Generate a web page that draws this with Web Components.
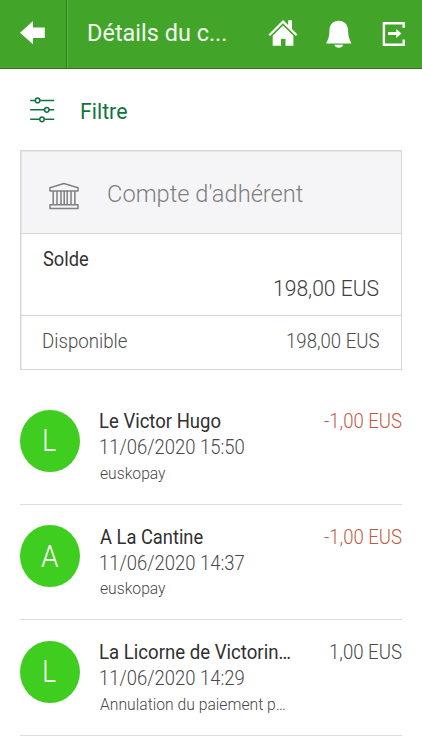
<!DOCTYPE html>
<html lang="fr"><head><meta charset="utf-8"><title>Détails du compte</title>
<style>
body{margin:0;background:#fff;font-family:Roboto,"Liberation Sans",sans-serif;font-weight:300;color:#4c4c4c;overflow:hidden}
</style></head><body>
<account-page></account-page>
<script>
const define=(name,html,setup)=>customElements.define(name,class extends HTMLElement{
  connectedCallback(){
    if(this.shadowRoot)return;
    this.attachShadow({mode:'open'}).innerHTML=html;
    if(setup)setup.call(this,this.shadowRoot);
  }
});

// One line of text whose ink spans exactly `w` pixels.
const pen=document.createElement('canvas').getContext('2d');
define('fit-text',`<style>:host{display:block;flex:none;white-space:nowrap}span{display:inline-block;white-space:pre;transform-origin:0 0}</style><span><slot></slot></span>`,function(root){
  const size=+this.getAttribute('size'),w=+this.getAttribute('w'),line=this.getAttribute('line')||24;
  this.style.fontSize=size+'px';
  this.style.lineHeight=line+'px';
  this.style.height=line+'px';
  this.style.width=w+'px';
  const weight=this.getAttribute('weight')||300;
  this.style.fontWeight=weight;
  const slot=root.querySelector('slot'),span=root.querySelector('span');
  const fit=()=>{
    const text=slot.assignedNodes({flatten:true}).map(n=>n.textContent).join('');
    if(!text)return;
    pen.font=`${weight} ${size}px Roboto`;
    const m=pen.measureText(text);
    const k=w/(m.actualBoundingBoxLeft+m.actualBoundingBoxRight);
    span.style.transform=`translateX(${m.actualBoundingBoxLeft*k}px) scaleX(${k})`;
  };
  fit();
  slot.addEventListener('slotchange',fit);
});

define('top-bar',`<style>
:host{display:flex;height:68px;background:#42a529;border-bottom:1px solid #35791f;color:#fff}
.back{width:66px;border-right:1px solid #2f8119;box-shadow:1px 0 #58b53d;flex:none}
.title{padding:18px 0 0 22px;flex:1;color:#f4fbf2}
svg{display:block;flex:none}
</style>
<div class="back"><svg width="66" height="68"><path fill="#fff" d="M20 32.7 33 21v6.6h11.8v10.5H33v6.2z"/></svg></div>
<div class="title"><fit-text size="24.8" w="137" line="30" weight="400"><slot></slot></fit-text></div>
<svg width="160" height="68" viewBox="262 0 160 68" fill="#fff">
<path d="M268.5 34.4 283 20l5.2 5.1V20.3h3.8v8.6l5.5 5.5-1.6 1.7L283 23.2l-12.9 12.9z"/>
<path d="M283 25.4 293.4 35.7V45.8H285.5V39H281V45.8H272.7V35.7z"/>
<path d="M338.7 20.8c5.6 0 8.9 3.6 9.3 8.9.4 5.5.6 8.5 3.2 12.7v1.2H326.4v-1.2c2.7-4.2 2.8-7.2 3.1-12.7.3-5.3 3.6-8.9 9.2-8.9z"/><path d="M334.2 44.7h9.1c-.8 2-2.4 3-4.5 3s-3.8-1-4.6-3z"/>
<path fill="none" stroke="#fff" stroke-width="2.4" d="M403.7 28V23.3H383.9V44.7H403.7V39.5"/>
<path d="M388 32h8.3v-3.1l5.2 4.5-5.2 4.7V35H388z"/>
</svg>`);

define('filter-button',`<style>:host{display:flex;height:81px;color:#0f7440;box-sizing:border-box}svg{display:block;margin:28px 0 0 29px;flex:none}fit-text{margin:29px 0 0 24.5px}</style>
<svg width="27" height="28" viewBox="29 97 27 28" fill="#fff" stroke="#0f7440" stroke-width="1.5"><path d="M30.2 100.4H54.2M30.2 109.8H54.2M30.2 119.3H54.2"/><ellipse cx="37.6" cy="100.4" rx="2.2" ry="2.4"/><ellipse cx="46.8" cy="109.8" rx="2.2" ry="2.4"/><ellipse cx="42" cy="119.3" rx="2.2" ry="2.4"/></svg>
<fit-text size="21.6" w="46" line="27" weight="400"><slot></slot></fit-text>`);

define('account-card',`<style>
:host{display:block;margin:0 20px;height:218px;border:1px solid #d7d7d8;box-shadow:inset 1px 1px #ebebec}
.head{display:flex;height:82px;background:#f5f5f8;border-bottom:1px solid #d7d7d8;color:#808080;box-shadow:inset 1px 1px #e7e7e9}
.head svg{margin:30px 0 0 27px}.head fit-text{margin:28px 0 0 28.5px}
.balance{height:82px;border-bottom:1px solid #d4d4d4;padding:13.5px 22px 0 22px;box-sizing:border-box}
.balance fit-text:first-child{color:#333}
.balance fit-text:last-child{margin:4.5px 0 0 auto;color:#404040}
.avail{display:flex;justify-content:space-between;padding:14px 22px 0 22px}
</style>
<div class="head"><svg width="31" height="30" viewBox="48 181 31 30" fill="none" stroke="#808080" stroke-width="1.5" stroke-linejoin="round"><path d="M50 187.7 63.9 183.5 78 187.7V191H50zM50 204.7H78V208.6H50zM53.2 191v13.7M57 191v13.7M61 191v13.7M64.2 191v13.7M67.2 191v13.7M71 191v13.7M74.9 191v13.7"/></svg>
<fit-text size="24.6" w="195.5" line="30">Compte d'adhérent</fit-text></div>
<div class="balance"><fit-text size="19.3" w="45.5" weight="400">Solde</fit-text><fit-text size="22" w="105" line="26">198,00 EUS</fit-text></div>
<div class="avail"><fit-text size="19.3" w="84.5">Disponible</fit-text><fit-text size="19.3" w="92">198,00 EUS</fit-text></div>`);

define('payment-row',`<style>
:host{display:flex;margin:0 20px;height:114.5px;border-bottom:1px solid #dcdcdc;color:#484848}
.avatar{flex:none;width:59.5px;height:62px;border-radius:50%;background:#3fcd1f;color:#fff;margin:20.5px 20.5px 0 0;display:flex;justify-content:center}
.avatar fit-text{margin-top:13.5px}
.info{flex:1;padding-top:21px}.name{color:#303030}
.name{margin-bottom:2px}.date{margin-bottom:.5px}
.amount{padding:21px 1px 0 0}.debit{color:#bf5a45}
</style><div class="avatar"></div><div class="info"></div><div class="amount"></div>`,function(root){
  const a=n=>this.getAttribute(n);
  root.querySelector('.avatar').innerHTML=`<fit-text size="30.5" w="${a('iw')}" line="36" weight="300">${a('initial')}</fit-text>`;
  root.querySelector('.info').innerHTML=`<fit-text class="name" size="19.3" w="${a('nw')}" weight="400">${a('name')}</fit-text><fit-text class="date" size="19.5" w="144">${a('date')}</fit-text><fit-text size="17" w="${a('dw')}">${a('note')}</fit-text>`;
  const d=a('amount').startsWith('-');
  root.querySelector('.amount').innerHTML=`<fit-text class="${d?'debit':''}" size="19.3" w="${d?77.5:71.5}">${a('amount')}</fit-text>`;
});

define('account-page',`<style>:host{display:block;width:422px;height:750px;overflow:hidden}.list{padding-top:19px}</style>
<top-bar>Détails du c...</top-bar><filter-button>Filtre</filter-button><account-card></account-card>
<div class="list">
<payment-row initial="L" iw="12" name="Le Victor Hugo" nw="121" date="11/06/2020 15:50" note="euskopay" dw="65.5" amount="-1,00 EUS"></payment-row>
<payment-row initial="A" iw="17.5" name="A La Cantine" nw="103" date="11/06/2020 14:37" note="euskopay" dw="65.5" amount="-1,00 EUS"></payment-row>
<payment-row initial="L" iw="12" name="La Licorne de Victorin…" nw="190" date="11/06/2020 14:29" note="Annulation du paiement p…" dw="185" amount="1,00 EUS"></payment-row>
</div>`);
</script></body></html>
